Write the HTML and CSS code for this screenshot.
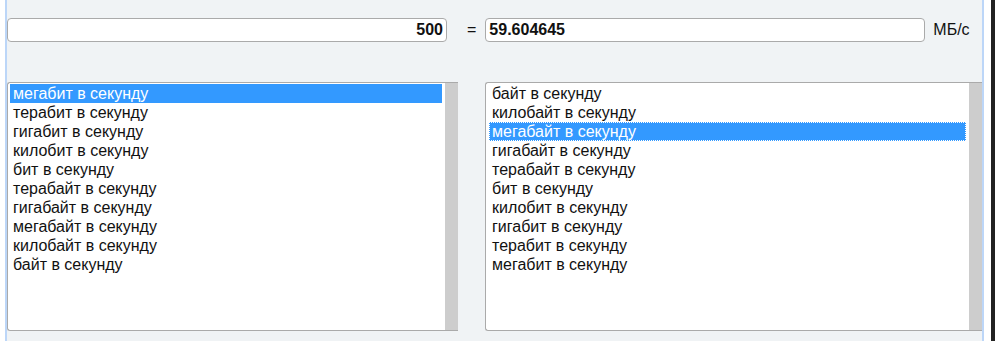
FILE: index.html
```html
<!DOCTYPE html>
<html>
<head>
	<meta charset="utf-8">
	<title>Конвертер скорости передачи данных</title>
	<link rel="stylesheet" href="styles.css">
</head>
<body>
	<div class="panel">
		<div class="row">
			<input class="field from" type="text" value="500">
			<span class="eq">=</span>
			<input class="field to" type="text" value="59.604645">
			<span class="unit">МБ/с</span>
		</div>
		<div class="lists">
			<div class="listbox left" role="listbox">
				<div class="items">
					<div class="opt selected">мегабит в секунду</div>
					<div class="opt">терабит в секунду</div>
					<div class="opt">гигабит в секунду</div>
					<div class="opt">килобит в секунду</div>
					<div class="opt">бит в секунду</div>
					<div class="opt">терабайт в секунду</div>
					<div class="opt">гигабайт в секунду</div>
					<div class="opt">мегабайт в секунду</div>
					<div class="opt">килобайт в секунду</div>
					<div class="opt">байт в секунду</div>
				</div>
				<div class="track"></div>
			</div>
			<div class="listbox right" role="listbox">
				<div class="items">
					<div class="opt">байт в секунду</div>
					<div class="opt">килобайт в секунду</div>
					<div class="opt selected focused">мегабайт в секунду</div>
					<div class="opt">гигабайт в секунду</div>
					<div class="opt">терабайт в секунду</div>
					<div class="opt">бит в секунду</div>
					<div class="opt">килобит в секунду</div>
					<div class="opt">гигабит в секунду</div>
					<div class="opt">терабит в секунду</div>
					<div class="opt">мегабит в секунду</div>
				</div>
				<div class="track"></div>
			</div>
		</div>
	</div>
	<div class="edge"></div>
</body>
</html>
```

FILE: styles.css
```css
html, body {
	height: 100%;
}
body {
	margin: 0;
	display: flex;
	background: #fff;
	font-family: "Liberation Sans", Arial, Helvetica, sans-serif;
	font-size: 16px;
	color: #111;
	overflow: hidden;
}

.panel {
	margin-left: 5px;
	width: 975px;
	flex-shrink: 0;
	background: #f0f3f5;
	border-left: 2px solid #bcd6f8;
	border-right: 2px solid #bcd6f8;
	padding-top: 18px;
}
.edge {
	margin-left: auto;
	width: 4px;
	background: #222;
}

.row {
	display: flex;
	align-items: center;
	height: 24px;
}
.field {
	box-sizing: border-box;
	width: 440px;
	height: 24px;
	margin: 0;
	border: 1px solid #aaa;
	border-radius: 4px;
	background: #fff;
	font-family: inherit;
	font-size: 16px;
	font-weight: bold;
	color: #111;
	outline: none;
}
.from {
	text-align: right;
	padding: 0 3px 0 4px;
}
.to {
	padding: 0 3px;
}
.eq {
	margin: 0 9px 0 20px;
}
.unit {
	margin-left: 8px;
}

.lists {
	display: flex;
	margin-top: 40px;
}
.listbox {
	display: flex;
	box-sizing: border-box;
	height: 249px;
	background: #fff;
	border: 1px solid #aaa;
	border-right: none;
	border-radius: 3px 0 0 3px;
}
.listbox.left {
	width: 451px;
}
.listbox.right {
	width: 497px;
	margin-left: 27px;
}
.items {
	flex: 1;
	padding: 1px 3px 0 2px;
}
.right .items {
	padding-left: 3px;
}
.track {
	width: 13px;
	background: #cdcdcd;
}

.opt {
	box-sizing: border-box;
	height: 19px;
	line-height: 18px;
	padding: 1px 3px 0;
	white-space: nowrap;
}
.opt.selected {
	background: #3399ff;
	color: #fff;
}
.opt.focused {
	outline: 1px dotted #fff;
	outline-offset: -1px;
}
```
